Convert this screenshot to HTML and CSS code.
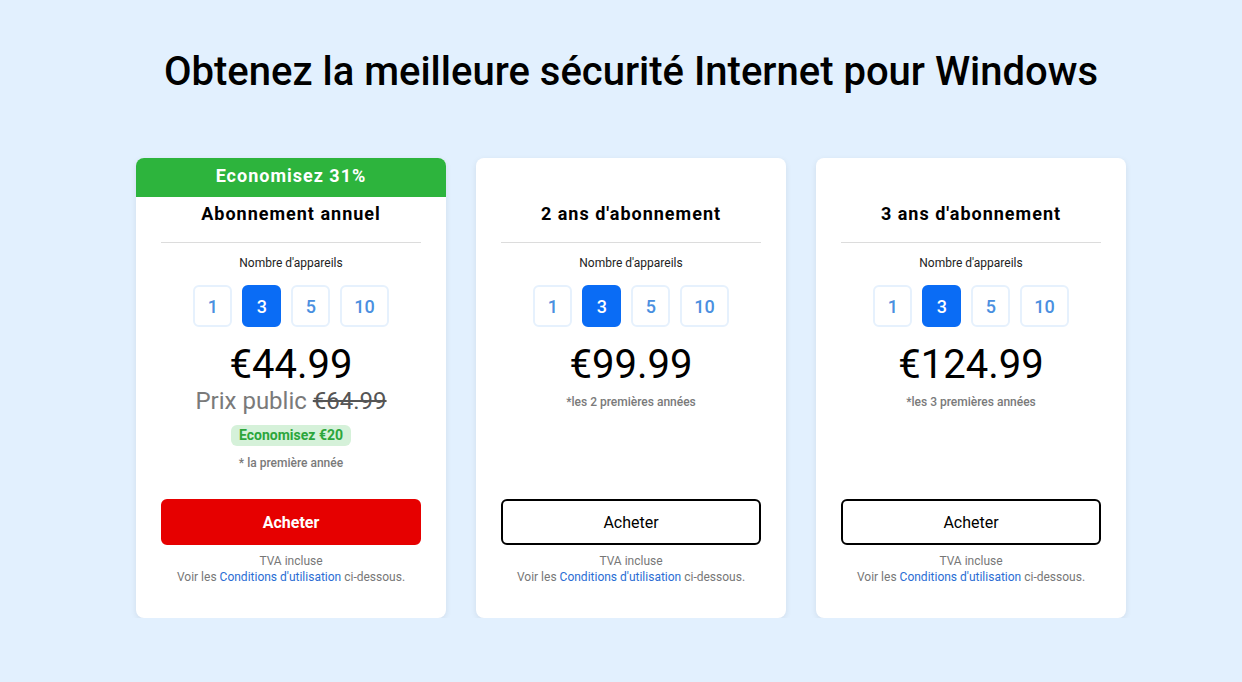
FILE: index.html
```html
<!DOCTYPE html>
<html lang="fr">
<head>
  <meta charset="UTF-8">
  <title>Sécurité Internet pour Windows</title>
  <link rel="stylesheet" href="styles.css">
</head>
<body>
  <div class="page">
    <h1>Obtenez la meilleure sécurité Internet pour Windows</h1>

    <div class="plans">
      <div class="card">
        <div class="ribbon">Economisez 31%</div>
        <h3>Abonnement annuel</h3>
        <hr>
        <p class="devices-label">Nombre d'appareils</p>
        <div class="devices">
          <button class="device">1</button>
          <button class="device active">3</button>
          <button class="device">5</button>
          <button class="device">10</button>
        </div>
        <div class="price">€44.99</div>
        <div class="public-price">Prix public <s>€64.99</s></div>
        <span class="saving">Economisez €20</span>
        <p class="note note-first">* la première année</p>
        <div class="card-footer">
          <button class="buy buy-primary">Acheter</button>
          <p class="terms">TVA incluse<br>Voir les <a href="#">Conditions d'utilisation</a> ci-dessous.</p>
        </div>
      </div>

      <div class="card">
        <h3>2 ans d'abonnement</h3>
        <hr>
        <p class="devices-label">Nombre d'appareils</p>
        <div class="devices">
          <button class="device">1</button>
          <button class="device active">3</button>
          <button class="device">5</button>
          <button class="device">10</button>
        </div>
        <div class="price">€99.99</div>
        <p class="note">*les 2 premières années</p>
        <div class="card-footer">
          <button class="buy">Acheter</button>
          <p class="terms">TVA incluse<br>Voir les <a href="#">Conditions d'utilisation</a> ci-dessous.</p>
        </div>
      </div>

      <div class="card">
        <h3>3 ans d'abonnement</h3>
        <hr>
        <p class="devices-label">Nombre d'appareils</p>
        <div class="devices">
          <button class="device">1</button>
          <button class="device active">3</button>
          <button class="device">5</button>
          <button class="device">10</button>
        </div>
        <div class="price">€124.99</div>
        <p class="note">*les 3 premières années</p>
        <div class="card-footer">
          <button class="buy">Acheter</button>
          <p class="terms">TVA incluse<br>Voir les <a href="#">Conditions d'utilisation</a> ci-dessous.</p>
        </div>
      </div>
    </div>
  </div>
</body>
</html>
```

FILE: styles.css
```css
body {
  margin: 0;
  font-family: Roboto, "Liberation Sans", Arial, sans-serif;
  background-color: #e2f0fe;
  color: #000;
}

.page {
  padding: 48px 0 0 20px;
}

h1 {
  margin: 0;
  text-align: center;
  font-size: 40px;
  line-height: 48px;
  font-weight: 500;
}

.plans {
  display: flex;
  justify-content: center;
  gap: 30px;
  margin-top: 62px;
}

.card {
  position: relative;
  width: 310px;
  min-height: 460px;
  box-sizing: border-box;
  padding: 46px 25px 33px;
  background-color: #fff;
  border-radius: 8px;
  box-shadow: 0 2px 6px rgba(0, 0, 0, 0.08);
  display: flex;
  flex-direction: column;
  align-items: center;
  text-align: center;
}

.ribbon {
  position: absolute;
  top: 0;
  left: 0;
  right: 0;
  height: 39px;
  line-height: 36px;
  background-color: #2db43d;
  color: #fff;
  font-size: 18px;
  font-weight: 700;
  letter-spacing: 1px;
  border-radius: 8px 8px 0 0;
}

.card h3 {
  margin: 0;
  font-size: 18px;
  line-height: 20px;
  font-weight: 700;
  letter-spacing: 1px;
}

.card hr {
  align-self: stretch;
  margin: 18px 0 0;
  border: 0;
  border-top: 1px solid #dcdcdc;
}

.devices-label {
  margin: 13px 0 0;
  font-size: 12px;
  line-height: 14px;
  color: #222;
}

.devices {
  display: flex;
  gap: 10px;
  margin-top: 15px;
}

.device {
  height: 42px;
  min-width: 39px;
  padding: 0 12px;
  border: 2px solid #e6f1fd;
  border-radius: 6px;
  background-color: #fff;
  color: #4a8fe0;
  font-family: inherit;
  font-size: 18px;
  font-weight: 500;
}

.device.active {
  background-color: #0a6cf5;
  border-color: #0a6cf5;
  color: #fff;
}

.price {
  margin-top: 15px;
  font-size: 40px;
  line-height: 46px;
  font-weight: 400;
}

.public-price {
  font-size: 24px;
  line-height: 26px;
  color: #7a7a7a;
}

.public-price s {
  color: #555;
}

.saving {
  margin-top: 11px;
  padding: 0 8px;
  height: 21px;
  line-height: 21px;
  background-color: #d5f1d9;
  color: #2ca63c;
  font-size: 14px;
  font-weight: 700;
  border-radius: 6px;
}

.note {
  margin: 7px 0 0;
  font-size: 12px;
  line-height: 14px;
  font-weight: 500;
  color: #7a7a7a;
}

.note-first {
  margin-top: 10px;
}

.card-footer {
  margin-top: auto;
  align-self: stretch;
}

.buy {
  display: block;
  width: 100%;
  height: 46px;
  border: 2px solid #000;
  border-radius: 6px;
  background-color: #fff;
  color: #000;
  font-family: inherit;
  font-size: 16px;
  cursor: pointer;
}

.buy-primary {
  background-color: #e60000;
  border-color: #e60000;
  color: #fff;
  font-weight: 700;
}

.terms {
  margin: 8px 0 0;
  font-size: 12px;
  line-height: 16px;
  color: #777;
}

.terms a {
  color: #2a6dd4;
  text-decoration: none;
}
```
